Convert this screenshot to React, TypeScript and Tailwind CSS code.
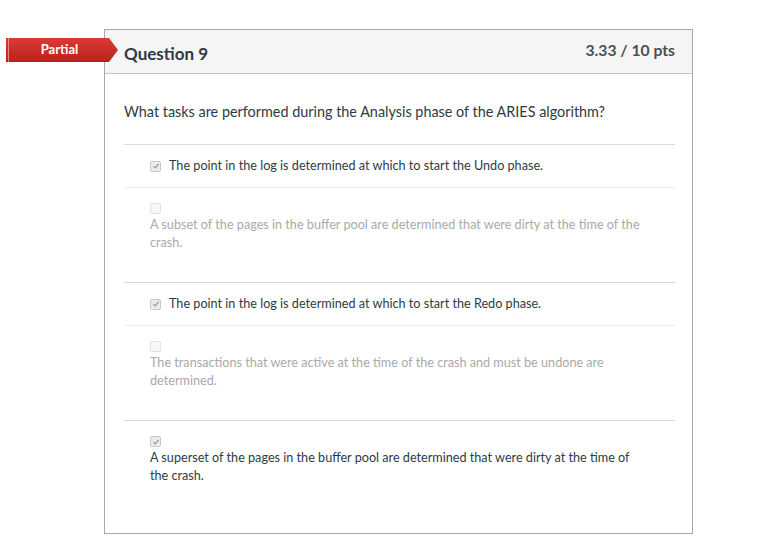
import React from 'react';

/* ─── Data ───────────────────────────────────────────────────────────── */
type Answer = { text: string; checked: boolean; wrap: boolean };

const answers: Answer[] = [
  { text: 'The point in the log is determined at which to start the Undo phase.', checked: true, wrap: false },
  {
    text: 'A subset of the pages in the buffer pool are determined that were dirty at the time of the crash.',
    checked: false,
    wrap: true,
  },
  { text: 'The point in the log is determined at which to start the Redo phase.', checked: true, wrap: false },
  {
    text: 'The transactions that were active at the time of the crash and must be undone are determined.',
    checked: false,
    wrap: true,
  },
  {
    text: 'A superset of the pages in the buffer pool are determined that were dirty at the time of the crash.',
    checked: true,
    wrap: true,
  },
];

/* ─── Checkbox ───────────────────────────────────────────────────────── */
function Box({ checked }: { checked: boolean }) {
  return (
    <span
      className={
        checked
          ? 'flex h-[11px] w-[11px] shrink-0 items-center justify-center rounded-[2px] border border-[#c8c8c8] bg-[#ececec]'
          : 'flex h-[11px] w-[11px] shrink-0 rounded-[2px] border border-[#e2e2e2] bg-[#f7f7f7]'
      }
    >
      {checked && (
        <svg viewBox="0 0 10 10" className="h-[8px] w-[8px]">
          <path d="M1.8 5.2 L4 7.3 L8.3 2.5" fill="none" stroke="#9a9a9a" strokeWidth={1.6} />
        </svg>
      )}
    </span>
  );
}

/* ─── App ────────────────────────────────────────────────────────────── */
export default function App() {
  return (
    <div className="min-h-screen bg-white pl-[104px] pt-[29px] font-['Lato','Liberation_Sans',sans-serif]">
      <div className="relative h-[505px] w-[589px] border border-[#a9a9a9] bg-white">
        {/* partial badge */}
        <div className="absolute left-[-99px] top-[8px] z-10 flex h-[24px] w-[112px] items-center bg-gradient-to-b from-[#dc3a36] to-[#b9201d] [clip-path:polygon(0_0,103px_0,112px_50%,103px_100%,0_100%)]">
          <span className="ml-[2px] h-full w-px bg-[#e98784]" />
          <span className="w-[101px] text-center text-[13px] font-bold text-white">Partial</span>
        </div>

        {/* header */}
        <div className="flex h-[44px] items-start justify-between border-b border-[#c4c8cb] bg-[#f5f5f5] pl-[19px] pr-[17px]">
          <h2 className="mt-[13px] text-[17px] font-bold leading-[22px] text-[#2d3b45]">Question 9</h2>
          <span className="mt-[9px] text-[15.7px] font-bold leading-[22px] text-[#4b4f53]">3.33 / 10 pts</span>
        </div>

        {/* body */}
        <div className="pl-[19px] pr-[17px]">
          <p className="pt-[29px] text-[14.4px] leading-[18px] text-[#2d3b45]">
            What tasks are performed during the Analysis phase of the ARIES algorithm?
          </p>

          <div className="mt-[23px]">
            {answers.map((a, i) => (
              <div
                key={i}
                className={
                  i % 2 === 0 ? 'border-t border-[#dadada]' : 'border-t border-[#ededed]'
                }
              >
                {a.wrap ? (
                  <div className="pb-[30px] pl-[26px] pr-[28px] pt-[15px]">
                    <Box checked={a.checked} />
                    <p
                      className={
                        a.checked
                          ? 'mt-[2px] text-[12.65px] leading-[18px] text-[#2d3b45]'
                          : 'mt-[2px] text-[12.65px] leading-[18px] text-[#a9a9a9]'
                      }
                    >
                      {a.text}
                    </p>
                  </div>
                ) : (
                  <div className="flex items-center gap-[8px] py-[12px] pl-[26px]">
                    <Box checked={a.checked} />
                    <span className="text-[12.65px] leading-[18px] text-[#2d3b45]">{a.text}</span>
                  </div>
                )}
              </div>
            ))}
          </div>
        </div>
      </div>
    </div>
  );
}
